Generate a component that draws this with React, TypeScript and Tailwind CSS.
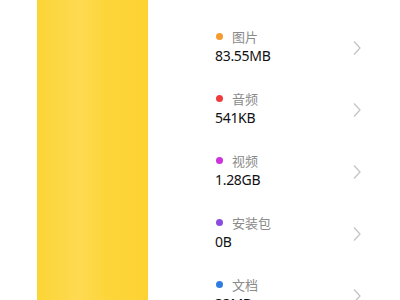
import React from 'react';

export default function App() {
  const items = [
    { color: 'bg-[#f59a2f]', label: '图片', value: '83.55MB' },
    { color: 'bg-[#ee3b3b]', label: '音频', value: '541KB' },
    { color: 'bg-[#cc33dd]', label: '视频', value: '1.28GB' },
    { color: 'bg-[#8a4de0]', label: '安装包', value: '0B' },
    { color: 'bg-[#2f7de1]', label: '文档', value: '33MB' },
  ];

  return (
    <div className="w-[400px] h-[300px] overflow-hidden bg-white flex font-['Noto_Sans','Noto_Sans_CJK_SC',sans-serif]">
      <div className="ml-[37px] w-[111px] h-full bg-[linear-gradient(90deg,#fcd535_0%,#fdda52_38%,#fdd63c_60%,#fdd232_100%)]" />
      <div className="flex-1 pt-[16px] pl-[67px] pr-[38px]">
        {items.map((item) => (
          <div key={item.label} className="h-[62px] flex items-center justify-between">
            <div className="flex flex-col">
              <div className="flex items-center h-[16px]">
                <span className={`w-[7px] h-[7px] rounded-full ${item.color} ml-[1px]`} />
                <span className="ml-[9px] text-[13px] leading-[16px] text-[#8a8a8a]">{item.label}</span>
              </div>
              <div className="mt-[1px] text-[14px] leading-[20px] text-[#111] tracking-[-0.3px]">{item.value}</div>
            </div>
            <svg width="10" height="16" viewBox="0 0 10 16" className="mt-[1px]">
              <path d="M2 1.5 L8 8 L2 14.5" fill="none" stroke="#c4c4c4" strokeWidth="1.3" />
            </svg>
          </div>
        ))}
      </div>
    </div>
  );
}
